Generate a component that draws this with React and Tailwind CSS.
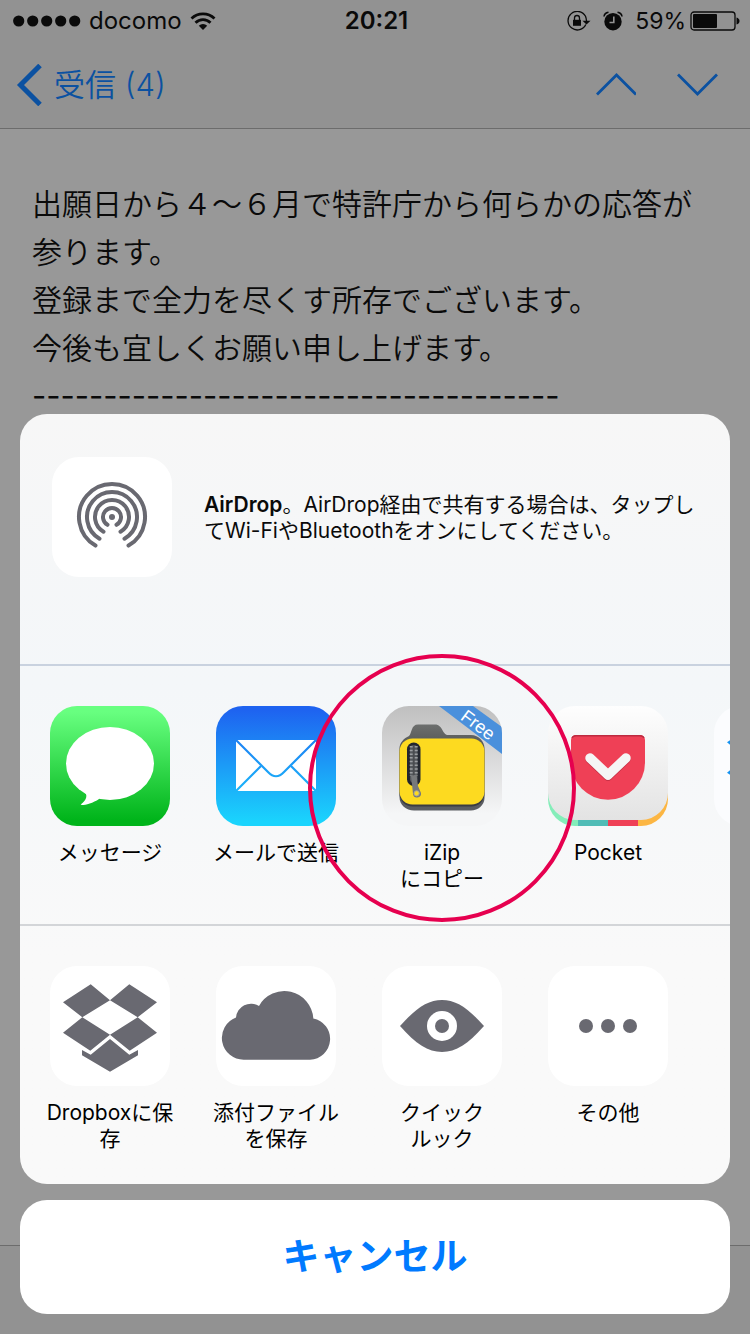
const arc = (r) => {
  const a = (30 * Math.PI) / 180;
  const dx = r * Math.sin(a);
  const y = 60 + r * Math.cos(a);
  return `M${60 - dx} ${y}A${r} ${r} 0 1 1 ${60 + dx} ${y}`;
};

function Tile({ children }) {
  return (
    <svg viewBox="0 0 120 120" className="block size-[120px] shrink-0 rounded-[27px]" aria-hidden="true">
      {children}
    </svg>
  );
}

function AirDropIcon() {
  return (
    <Tile>
      <rect width="120" height="120" fill="#fff" />
      <circle cx="60" cy="60" r="3" fill="#696971" />
      <g fill="none" stroke="#696971" strokeWidth="4" strokeLinecap="round">
        {[9, 17, 25, 33].map((r) => (
          <path key={r} d={arc(r)} />
        ))}
      </g>
    </Tile>
  );
}

function MessageIcon() {
  return (
    <Tile>
      <defs>
        <linearGradient id="msg" x1="0" y1="0" x2="0" y2="1">
          <stop offset="0.05" stopColor="#68ff80" />
          <stop offset="0.95" stopColor="#00b41a" />
        </linearGradient>
      </defs>
      <rect width="120" height="120" fill="url(#msg)" />
      <ellipse cx="60" cy="57.5" rx="44" ry="36.5" fill="#fff" />
      <path d="M34 85C38 89 37 94 30.7 98.6C31 100 42 98 49 93L52 86Z" fill="#fff" />
    </Tile>
  );
}

function MailIcon() {
  return (
    <Tile>
      <defs>
        <linearGradient id="mail" gradientUnits="userSpaceOnUse" x1="0" y1="4" x2="0" y2="116">
          <stop offset="0" stopColor="#1e63f0" />
          <stop offset="1" stopColor="#1ad4fd" />
        </linearGradient>
      </defs>
      <rect width="120" height="120" fill="url(#mail)" />
      <rect x="20" y="34" width="80" height="51" fill="#fff" />
      <g fill="none" stroke="url(#mail)" strokeWidth="2.2">
        <path d="M20 34L52 66Q60 74.5 68 66L100 34" />
        <path d="M20 85L45 60M100 85L75 60" />
      </g>
    </Tile>
  );
}

function ZipIcon() {
  return (
    <Tile>
      <defs>
        <linearGradient id="zipBg" x1="0" y1="0" x2="0" y2="1">
          <stop offset="0" stopColor="#bfbfbf" />
          <stop offset="0.9" stopColor="#f5f6f7" />
        </linearGradient>
        <linearGradient id="folder" x1="0" y1="0" x2="0" y2="1">
          <stop offset="0" stopColor="#6d6f6e" />
          <stop offset="0.3" stopColor="#505251" />
          <stop offset="1" stopColor="#5b5d62" />
        </linearGradient>
      </defs>
      <rect width="120" height="120" fill="url(#zipBg)" />
      <path
        d="M27 30C30 27 29 18.5 36 18.5H53C61 18.5 60 29 66 29H89C97 29 102.500 36 102.500 42V92C102.500 99 96 104.500 89 104.500H32C24 104.500 17.500 99 17.500 91V42C17.500 37 22 32 27 30Z"
        fill="url(#folder)"
      />
      <rect x="17.500" y="33" width="85" height="67.500" rx="13" fill="#3a3c42" />
      <rect x="17.500" y="32.500" width="85" height="66" rx="13" fill="#fdda20" />
      <rect x="25" y="36.500" width="13.500" height="43.500" rx="6.700" fill="#23262f" />
      <rect x="28" y="39" width="7.500" height="38" rx="3.700" fill="#55585c" />
      <path d="M31.700 40V70" stroke="#9b9da0" strokeWidth="8" strokeDasharray="1.500 2.200" />
      <path d="M31.700 39V72" stroke="#4a4c50" strokeWidth="2" />
      <path d="M29 70L34.500 68.500L36 80L39 87A4 4 0 1 1 31 88L30 78Z" fill="#77797b" />
      <circle cx="34.600" cy="87.300" r="2.600" fill="#fdda20" stroke="#a5a5a0" strokeWidth="1" />
      <path d="M57 0H91L120 21V48Z" fill="#4a90dc" />
      <text
        x="96"
        y="25"
        transform="rotate(37 96 19)"
        textAnchor="middle"
        fill="#fff"
        fontSize="18"
        fontFamily="'Liberation Sans', sans-serif"
      >
        Free
      </text>
    </Tile>
  );
}

function PocketIcon() {
  return (
    <Tile>
      <defs>
        <linearGradient id="pocketBg" x1="0" y1="0" x2="0" y2="1">
          <stop offset="0" stopColor="#fefefe" />
          <stop offset="1" stopColor="#e3e3e3" />
        </linearGradient>
      </defs>
      <rect y="60" width="30" height="60" fill="#84edb9" />
      <rect x="30" y="60" width="30" height="60" fill="#50bcb6" />
      <rect x="60" y="60" width="30" height="60" fill="#ef4056" />
      <rect x="90" y="60" width="30" height="60" fill="#fcb643" />
      <path d="M0 0H120V87A27 27 0 0 1 93 114H27A27 27 0 0 1 0 87Z" fill="url(#pocketBg)" />
      <path d="M28 29H92A5 5 0 0 1 97 34V56.700A37 37 0 0 1 23 56.700V34A5 5 0 0 1 28 29Z" fill="#ef4056" />
      <path d="M24 32Q25 29.700 28 29.700H92Q95 29.700 96 32" fill="none" stroke="#bd2b40" strokeWidth="1.400" />
      <g fill="none" strokeWidth="9.500" strokeLinecap="round" strokeLinejoin="round">
        <path d="M42 53L60 70L78 53" stroke="#c63146" />
        <path d="M42 52L60 69L78 52" stroke="#f5f5f5" />
      </g>
    </Tile>
  );
}

function BoxIcon({ color, background }) {
  return (
    <Tile>
      <rect width="120" height="120" fill={background} />
      <path
        fill={color}
        d="M40.700 18.300L60 34.300L32.300 51.300L13 36.300ZM79.300 18.300L107 36.300L87.700 51.300L60 34.300ZM32.300 51.300L60 68.700L40.300 84.700L13 66.700ZM87.700 51.300L107 66.700L79.700 84.700L60 68.700ZM60 73L79.300 88.700L88 84V89.300L60 105.700L32 89.300V84L40.700 88.700Z"
      />
    </Tile>
  );
}

function CloudIcon() {
  return (
    <Tile>
      <rect width="120" height="120" fill="#fff" />
      <path
        fill="#696971"
        d="M28 93.700A21.800 21.800 0 0 1 20 51.500A15 15 0 0 1 43 40A29 29 0 0 1 97.300 52.500A20.800 20.800 0 0 1 94 93.700Z"
      />
    </Tile>
  );
}

function EyeIcon() {
  return (
    <Tile>
      <rect width="120" height="120" fill="#fff" />
      <path fill="#696971" d="M18 60C34 42 46 34 60 34S86 42 102 60C86 78 74 86 60 86S34 78 18 60Z" />
      <circle cx="60" cy="60" r="15" fill="#fff" />
      <circle cx="60" cy="60" r="7" fill="#696971" />
    </Tile>
  );
}

function MoreIcon() {
  return (
    <Tile>
      <rect width="120" height="120" fill="#fff" />
      {[38, 60, 82].map((x) => (
        <circle key={x} cx={x} cy="60" r="7" fill="#696971" />
      ))}
    </Tile>
  );
}

const apps = [
  { name: 'メッセージ', lines: ['メッセージ'], icon: <MessageIcon /> },
  { name: 'メール', lines: ['メールで送信'], icon: <MailIcon /> },
  { name: 'iZip', lines: ['iZip', 'にコピー'], icon: <ZipIcon />, circled: true },
  { name: 'Pocket', lines: ['Pocket'], icon: <PocketIcon /> },
  { name: 'Dropbox', lines: [], icon: <BoxIcon color="#1492f0" background="#fbfcfe" /> },
];

const actions = [
  { name: 'Dropbox', lines: ['Dropboxに保', '存'], icon: <BoxIcon color="#696971" background="#fff" /> },
  { name: '添付ファイル', lines: ['添付ファイル', 'を保存'], icon: <CloudIcon /> },
  { name: 'クイックルック', lines: ['クイック', 'ルック'], icon: <EyeIcon /> },
  { name: 'その他', lines: ['その他'], icon: <MoreIcon /> },
];

function ShareRow({ items }) {
  return (
    <div className="flex h-[258px] gap-5 pt-10 pl-[17px]">
      {items.map((item) => (
        <button
          key={item.name}
          type="button"
          aria-label={item.lines.length ? undefined : item.name}
          className="relative flex w-[146px] shrink-0 flex-col items-center"
        >
          {item.icon}
          <span className="mt-3.5 text-center text-[21px] leading-[26px] whitespace-nowrap text-black">
            {item.lines.map((line) => (
              <span key={line} className="block">
                {line}
              </span>
            ))}
          </span>
          {item.circled && (
            <span className="pointer-events-none absolute -top-[52px] left-1/2 z-10 size-[268px] -translate-x-1/2 rounded-full border-4 border-[#e6004f]" />
          )}
        </button>
      ))}
    </div>
  );
}

function StatusBar() {
  return (
    <div className="grid h-[42px] grid-cols-[1fr_auto_1fr] items-center pr-2.5 pl-[13px] text-[24px] leading-10 text-[#0a0a0a]">
      <div className="flex items-center gap-2">
        <svg viewBox="0 0 68 12" className="h-3 w-[68px]" aria-hidden="true">
          {[0, 1, 2, 3, 4].map((i) => (
            <circle key={i} cx={5.7 + i * 14} cy="6" r="5.600" fill="currentColor" />
          ))}
        </svg>
        <span>docomo</span>
        <svg viewBox="0 0 26 20" className="h-5 w-[26px]" aria-hidden="true">
          <g fill="none" stroke="currentColor" strokeWidth="2.800">
            <path d="M1.500 7.500A16.500 16.500 0 0 1 24.500 7.500" />
            <path d="M5.500 11.800A10.600 10.600 0 0 1 20.500 11.800" />
          </g>
          <path d="M13 19L8.800 14.700A6 6 0 0 1 17.200 14.700Z" fill="currentColor" />
        </svg>
      </div>
      <span className="font-semibold">20:21</span>
      <div className="flex items-center justify-end">
        <svg viewBox="0 0 24 20" className="h-5 w-6" aria-hidden="true">
          <path
            d="M18.800 13.500A9.300 9.300 0 1 1 18.500 5.200Q19.300 7 19.500 10"
            fill="none"
            stroke="currentColor"
            strokeWidth="1.300"
          />
          <path d="M15.500 9.700H23.500L19.500 13.500Z" fill="currentColor" />
          <rect x="6" y="8.800" width="8" height="6" fill="currentColor" />
          <path d="M7.500 9V7A2.500 2.500 0 0 1 12.500 7V9" fill="none" stroke="currentColor" strokeWidth="1.300" />
        </svg>
        <svg viewBox="0 0 20 20" className="ml-3 h-5 w-5" aria-hidden="true">
          <circle cx="10" cy="10.700" r="8.700" fill="currentColor" />
          <path d="M1 5.500Q1.500 2 5.500 1.300M19 5.500Q18.500 2 14.500 1.300" fill="none" stroke="currentColor" strokeWidth="1.600" />
          <path d="M10.800 5.500V11.500H6.500" fill="none" stroke="#929292" strokeWidth="1.600" />
        </svg>
        <span className="ml-3 text-[23px]">59%</span>
        <svg viewBox="0 0 50 20" className="ml-1 h-5 w-[50px]" aria-hidden="true">
          <rect x="1" y="1" width="44" height="18" rx="3" fill="none" stroke="currentColor" strokeWidth="1.300" />
          <rect x="3" y="3" width="24" height="14" rx="1" fill="currentColor" />
          <path d="M46.500 6.500Q49.500 7.500 49.500 10T46.500 13.500Z" fill="currentColor" />
        </svg>
      </div>
    </div>
  );
}

function NavBar() {
  return (
    <nav className="flex h-[86px] items-center justify-between pr-8 pl-4 text-[#0b51a1]">
      <button type="button" className="flex items-center gap-3 text-[31px] leading-10">
        <svg viewBox="0 0 26 42" className="h-[42px] w-[26px]" aria-hidden="true">
          <path d="M24 1.500L4.500 21L24 40.500" fill="none" stroke="currentColor" strokeWidth="5" />
        </svg>
        <span className="font-[350]">受信 (4)</span>
      </button>
      <div className="flex gap-10">
        <button type="button" aria-label="前のメッセージ">
          <svg viewBox="0 0 42 24" className="block h-6 w-[42px]" aria-hidden="true">
            <path d="M3 21.500L22.500 2L42 21.500" fill="none" stroke="currentColor" strokeWidth="2.800" />
          </svg>
        </button>
        <button type="button" aria-label="次のメッセージ">
          <svg viewBox="0 0 42 24" className="block h-6 w-[42px]" aria-hidden="true">
            <path d="M2 1.500L21.500 21L41 1.500" fill="none" stroke="currentColor" strokeWidth="2.800" />
          </svg>
        </button>
      </div>
    </nav>
  );
}

function App() {
  return (
    <div
      lang="ja"
      className="relative flex min-h-screen flex-col overflow-hidden bg-[#989898] font-['Inter','Noto_Sans_CJK_JP',sans-serif]"
    >
      <header className="border-b border-[#6c6c6c] bg-[#929292]">
        <StatusBar />
        <NavBar />
      </header>

      <main className="flex-1 px-8 pt-[51px] text-[30px] leading-[48px] font-[350] text-[#0a0a0a]">
        <p>出願日から４〜６月で特許庁から何らかの応答が参ります。</p>
        <p>登録まで全力を尽くす所存でございます。</p>
        <p>今後も宜しくお願い申し上げます。</p>
        <p className="text-[31px] font-normal whitespace-nowrap">-------------------------------------</p>
      </main>

      <footer className="h-[89px] border-t border-[#6c6c6c] bg-[#929292]" />

      <div role="dialog" aria-label="共有" className="absolute inset-x-5 bottom-5 flex flex-col gap-4">
        <section className="overflow-hidden rounded-[27px] bg-linear-to-b from-[#f7f7f7] via-[#f4f7f9] via-35% to-[#f9f9f9] to-70%">
          <div className="flex h-[250px] gap-8 pt-[43px] pr-3 pl-8">
            <AirDropIcon />
            <p className="pt-[35px] text-[21px] leading-[26px] whitespace-nowrap text-[#0a0a0a]">
              <b className="font-semibold">AirDrop</b>。AirDrop経由で共有する場合は、タップし
              <br />
              てWi-FiやBluetoothをオンにしてください。
            </p>
          </div>
          <hr className="border-t-2 border-[#c9d2df]" />
          <ShareRow items={apps} />
          <hr className="border-t-2 border-[#d3d5d8]" />
          <ShareRow items={actions} />
        </section>
        <button type="button" className="h-[114px] rounded-[27px] bg-white text-[37px] font-bold text-[#007aff]">
          キャンセル
        </button>
      </div>
    </div>
  );
}

export default App;
